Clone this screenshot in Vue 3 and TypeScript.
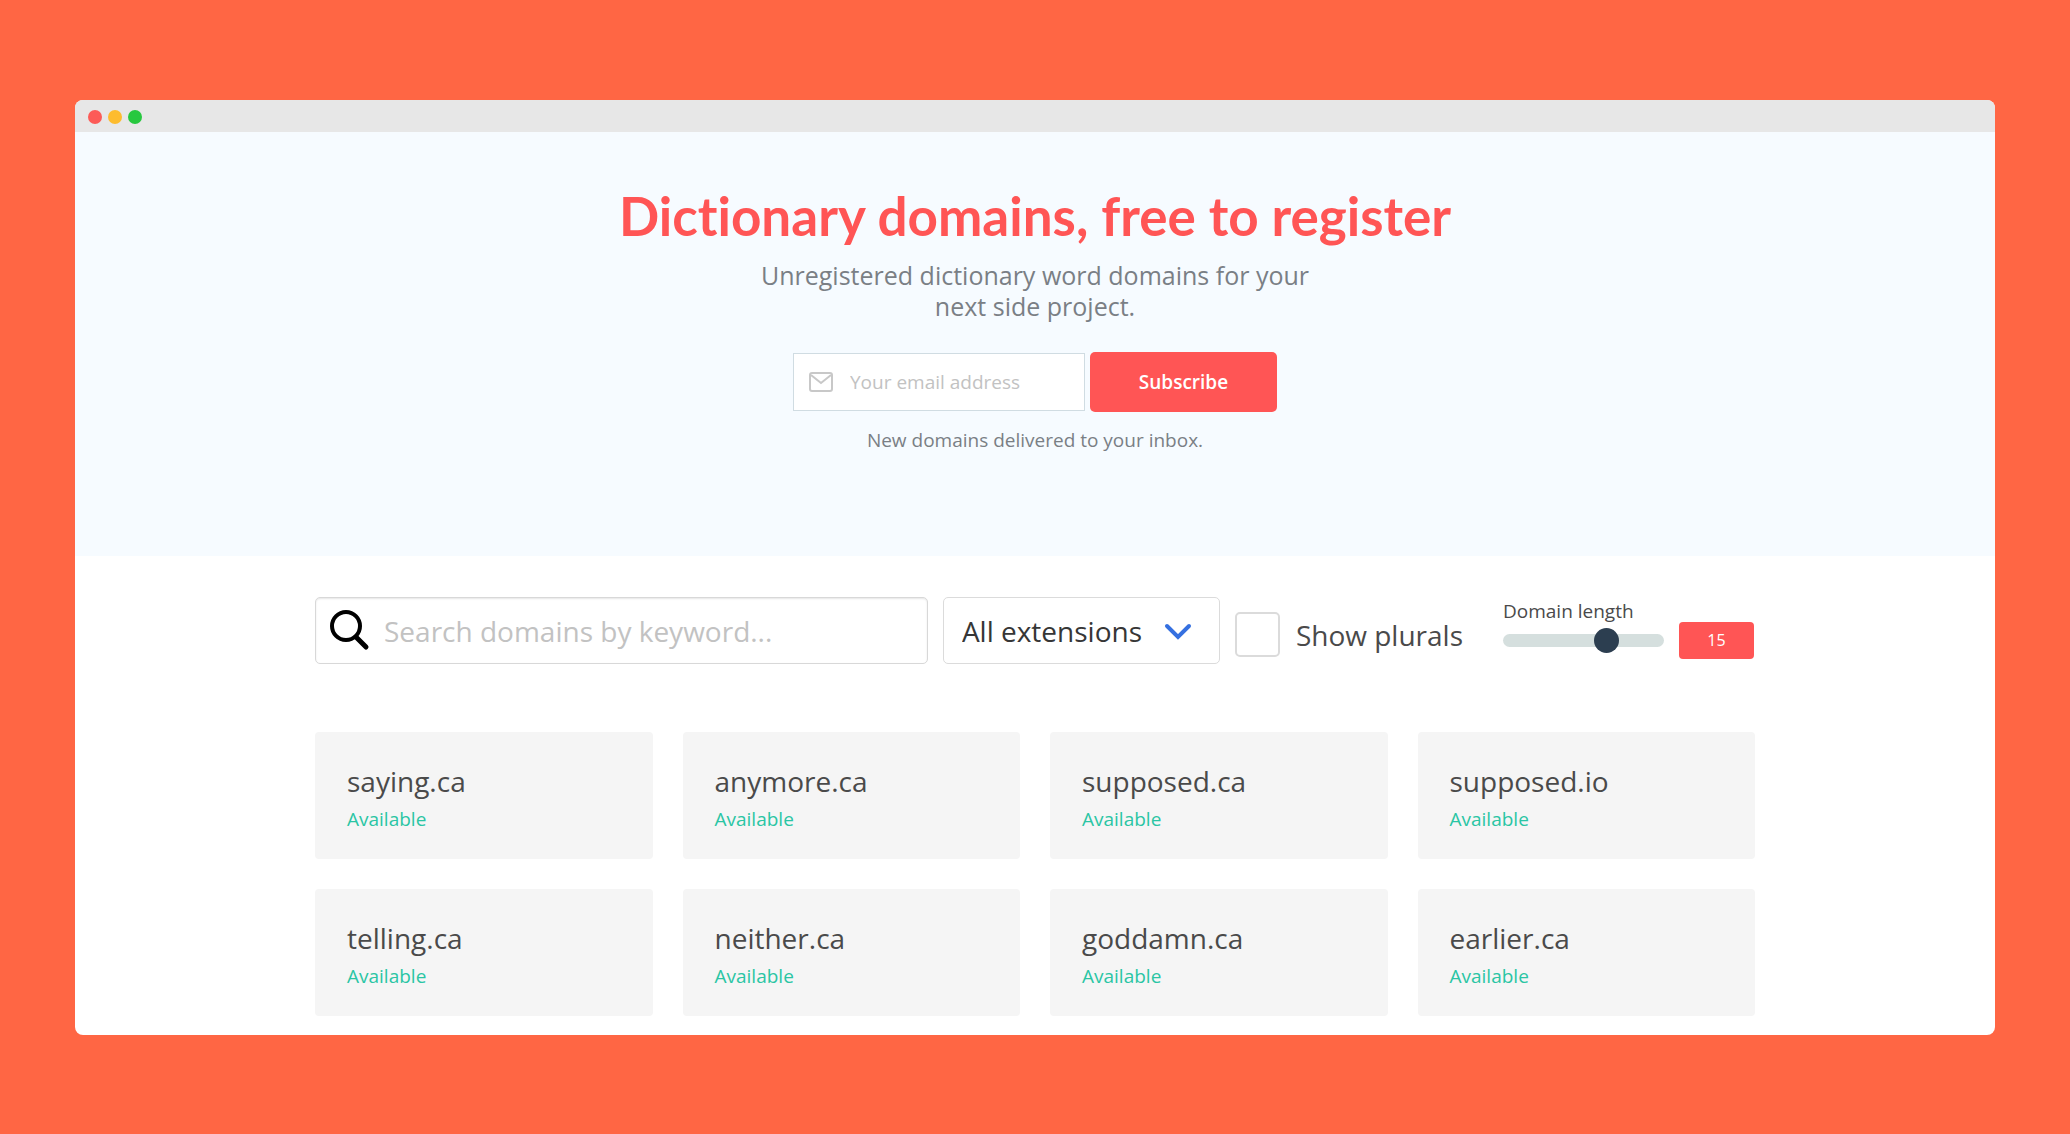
<script setup lang="ts">
import { computed, ref } from 'vue'

interface Domain {
  name: string
}

const email = ref('')
const keyword = ref('')
const extension = ref('all')
const showPlurals = ref(false)
const maxLength = ref(15)

const domains: Domain[] = [
  { name: 'saying.ca' },
  { name: 'anymore.ca' },
  { name: 'supposed.ca' },
  { name: 'supposed.io' },
  { name: 'telling.ca' },
  { name: 'neither.ca' },
  { name: 'goddamn.ca' },
  { name: 'earlier.ca' },
]

const visibleDomains = computed(() =>
  domains.filter(
    (d) =>
      d.name.includes(keyword.value.toLowerCase()) &&
      (extension.value === 'all' || d.name.endsWith(extension.value)) &&
      d.name.length <= maxLength.value,
  ),
)
</script>

<template>
  <div class="backdrop">
    <div class="window">
      <div class="titlebar">
        <span class="dot red"></span>
        <span class="dot yellow"></span>
        <span class="dot green"></span>
      </div>

      <header class="hero">
        <h1>Dictionary domains, free to register</h1>
        <p class="lead">Unregistered dictionary word domains for your next side project.</p>
        <form class="subscribe" @submit.prevent>
          <label class="email">
            <svg width="24" height="20" viewBox="0 0 24 20" fill="none" stroke="#c8c8c8" stroke-width="2" aria-hidden="true">
              <rect x="1" y="1" width="22" height="18" rx="2" />
              <path d="M2 3l10 8 10-8" />
            </svg>
            <input v-model="email" type="email" placeholder="Your email address" aria-label="Your email address" />
          </label>
          <button type="submit">Subscribe</button>
        </form>
        <p class="note">New domains delivered to your inbox.</p>
      </header>

      <main class="content">
        <div class="filters">
          <label class="search">
            <svg width="42" height="42" viewBox="0 0 42 42" fill="none" stroke="#000" aria-hidden="true">
              <circle cx="18" cy="16" r="14" stroke-width="4" />
              <path d="M28 27l10 10" stroke-width="5" stroke-linecap="round" />
            </svg>
            <input v-model="keyword" type="text" placeholder="Search domains by keyword..." aria-label="Search domains by keyword" />
          </label>

          <div class="extensions">
            <select v-model="extension" aria-label="Extension">
              <option value="all">All extensions</option>
              <option value=".ca">.ca</option>
              <option value=".io">.io</option>
            </select>
            <svg class="chevron" width="28" height="18" viewBox="0 0 28 18" fill="none" stroke="#3570e0" stroke-width="4" stroke-linecap="round" aria-hidden="true">
              <path d="M3 3l11 11L25 3" />
            </svg>
          </div>

          <label class="plurals">
            <input v-model="showPlurals" type="checkbox" />
            <span>Show plurals</span>
          </label>

          <div class="length">
            <div class="slider">
              <label for="domain-length">Domain length</label>
              <input id="domain-length" v-model.number="maxLength" type="range" min="5" max="20" />
            </div>
            <output for="domain-length">{{ maxLength }}</output>
          </div>
        </div>

        <ul class="cards">
          <li v-for="domain in visibleDomains" :key="domain.name" class="card">
            <h2>{{ domain.name }}</h2>
            <p>Available</p>
          </li>
        </ul>
      </main>
    </div>
  </div>
</template>

<style>
body {
  margin: 0;
  background: #ff6644;
}
</style>

<style scoped>
* {
  box-sizing: border-box;
}

.backdrop {
  min-height: 100vh;
  padding: 100px 75px 98px;
  background: #ff6644;
  font-family: 'Open Sans', 'Noto Sans', sans-serif;
  color: #4a4a4a;
}

h1,
h2,
p,
ul {
  margin: 0;
  padding: 0;
}

input,
select,
button {
  margin: 0;
  font-family: inherit;
}

.window {
  overflow: hidden;
  border-radius: 8px;
  background: #fff;
}

.titlebar {
  display: flex;
  align-items: center;
  gap: 6px;
  height: 32px;
  padding: 2px 13px 0;
  background: #e7e7e7;
}

.dot {
  width: 14px;
  height: 14px;
  border-radius: 50%;
}

.red {
  background: #fc5b57;
}

.yellow {
  background: #fdbc2e;
}

.green {
  background: #27c83f;
}

.hero {
  display: flex;
  flex-direction: column;
  align-items: center;
  padding: 52px 24px 104px;
  background: #f6fbff;
  text-align: center;
}

h1 {
  font-family: Lato, sans-serif;
  font-size: 53px;
  font-variant-ligatures: none;
  font-weight: 700;
  line-height: 64px;
  color: #ff5555;
}

.lead {
  max-width: 580px;
  margin-top: 12px;
  font-size: 25px;
  line-height: 31px;
  color: #7a7f85;
}

.subscribe {
  display: flex;
  align-items: center;
  gap: 5px;
  margin-top: 30px;
}

.email {
  display: flex;
  align-items: center;
  gap: 17px;
  width: 292px;
  height: 58px;
  padding: 0 15px;
  border: 1px solid #d0dce2;
  background: #fff;
}

.email svg,
.search svg {
  flex: none;
}

.email input,
.search input {
  flex: 1;
  min-width: 0;
  padding: 0;
  border: 0;
  outline: 0;
  background: transparent;
  color: #4a4a4a;
}

.email input {
  font-size: 19px;
}

input::placeholder {
  color: #c2c2c2;
  opacity: 1;
}

.subscribe button {
  width: 187px;
  height: 60px;
  border: 0;
  border-radius: 5px;
  background: #ff5555;
  color: #fff;
  font-size: 19px;
  font-weight: 600;
}

.note {
  margin-top: 16px;
  font-size: 19px;
  line-height: 24px;
  color: #7a7f85;
}

.content {
  max-width: 1440px;
  margin: 0 auto;
  padding: 41px 0 19px;
}

.filters {
  display: flex;
  align-items: center;
  padding-right: 1px;
}

.search {
  display: flex;
  flex: 1;
  align-items: center;
  gap: 14px;
  height: 67px;
  padding: 0 12px;
  border: 1px solid #d8d8d8;
  border-radius: 5px;
  box-shadow: inset 0 1px 2px rgba(10, 10, 10, 0.1);
}

.search input {
  font-size: 28px;
}

.extensions {
  position: relative;
  margin-left: 15px;
}

.extensions select {
  width: 277px;
  height: 67px;
  padding: 0 18px;
  border: 1px solid #dbdbdb;
  border-radius: 5px;
  background: #fff;
  appearance: none;
  color: #363636;
  font-size: 28px;
}

.chevron {
  position: absolute;
  top: 26px;
  right: 28px;
  pointer-events: none;
}

.plurals {
  display: flex;
  align-items: center;
  gap: 16px;
  margin: 8px 0 0 15px;
  font-size: 28px;
  white-space: nowrap;
}

.plurals input {
  width: 45px;
  height: 45px;
  border: 2px solid #dbdbdb;
  border-radius: 5px;
  background: #fff;
  appearance: none;
}

.plurals input:checked {
  background: #ff5555;
}

.length {
  display: flex;
  align-items: flex-end;
  gap: 15px;
  margin: 0 0 4px 40px;
}

.slider {
  display: flex;
  flex-direction: column;
  width: 161px;
  padding-bottom: 6px;
}

.slider label {
  font-size: 19px;
  line-height: 24px;
}

.slider input {
  width: 100%;
  height: 25px;
  margin-top: 5px;
  background: transparent;
  appearance: none;
}

.slider input::-webkit-slider-runnable-track {
  height: 13px;
  border-radius: 7px;
  background: #d5dfde;
}

.slider input::-webkit-slider-thumb {
  width: 25px;
  height: 25px;
  margin-top: -6px;
  border-radius: 50%;
  background: #2c3e50;
  appearance: none;
}

.length output {
  width: 75px;
  height: 37px;
  border-radius: 4px;
  background: #ff5555;
  color: #fff;
  font-size: 16px;
  line-height: 37px;
  text-align: center;
}

.cards {
  display: grid;
  grid-template-columns: repeat(4, 1fr);
  gap: 30px;
  margin-top: 68px;
  list-style: none;
}

.card {
  padding: 29px 32px 28px;
  border-radius: 4px;
  background: #f5f5f5;
}

.card h2 {
  font-size: 28px;
  font-weight: 400;
  line-height: 40px;
}

.card p {
  margin-top: 6px;
  font-size: 19px;
  line-height: 24px;
  color: #2ac5a4;
}
</style>
